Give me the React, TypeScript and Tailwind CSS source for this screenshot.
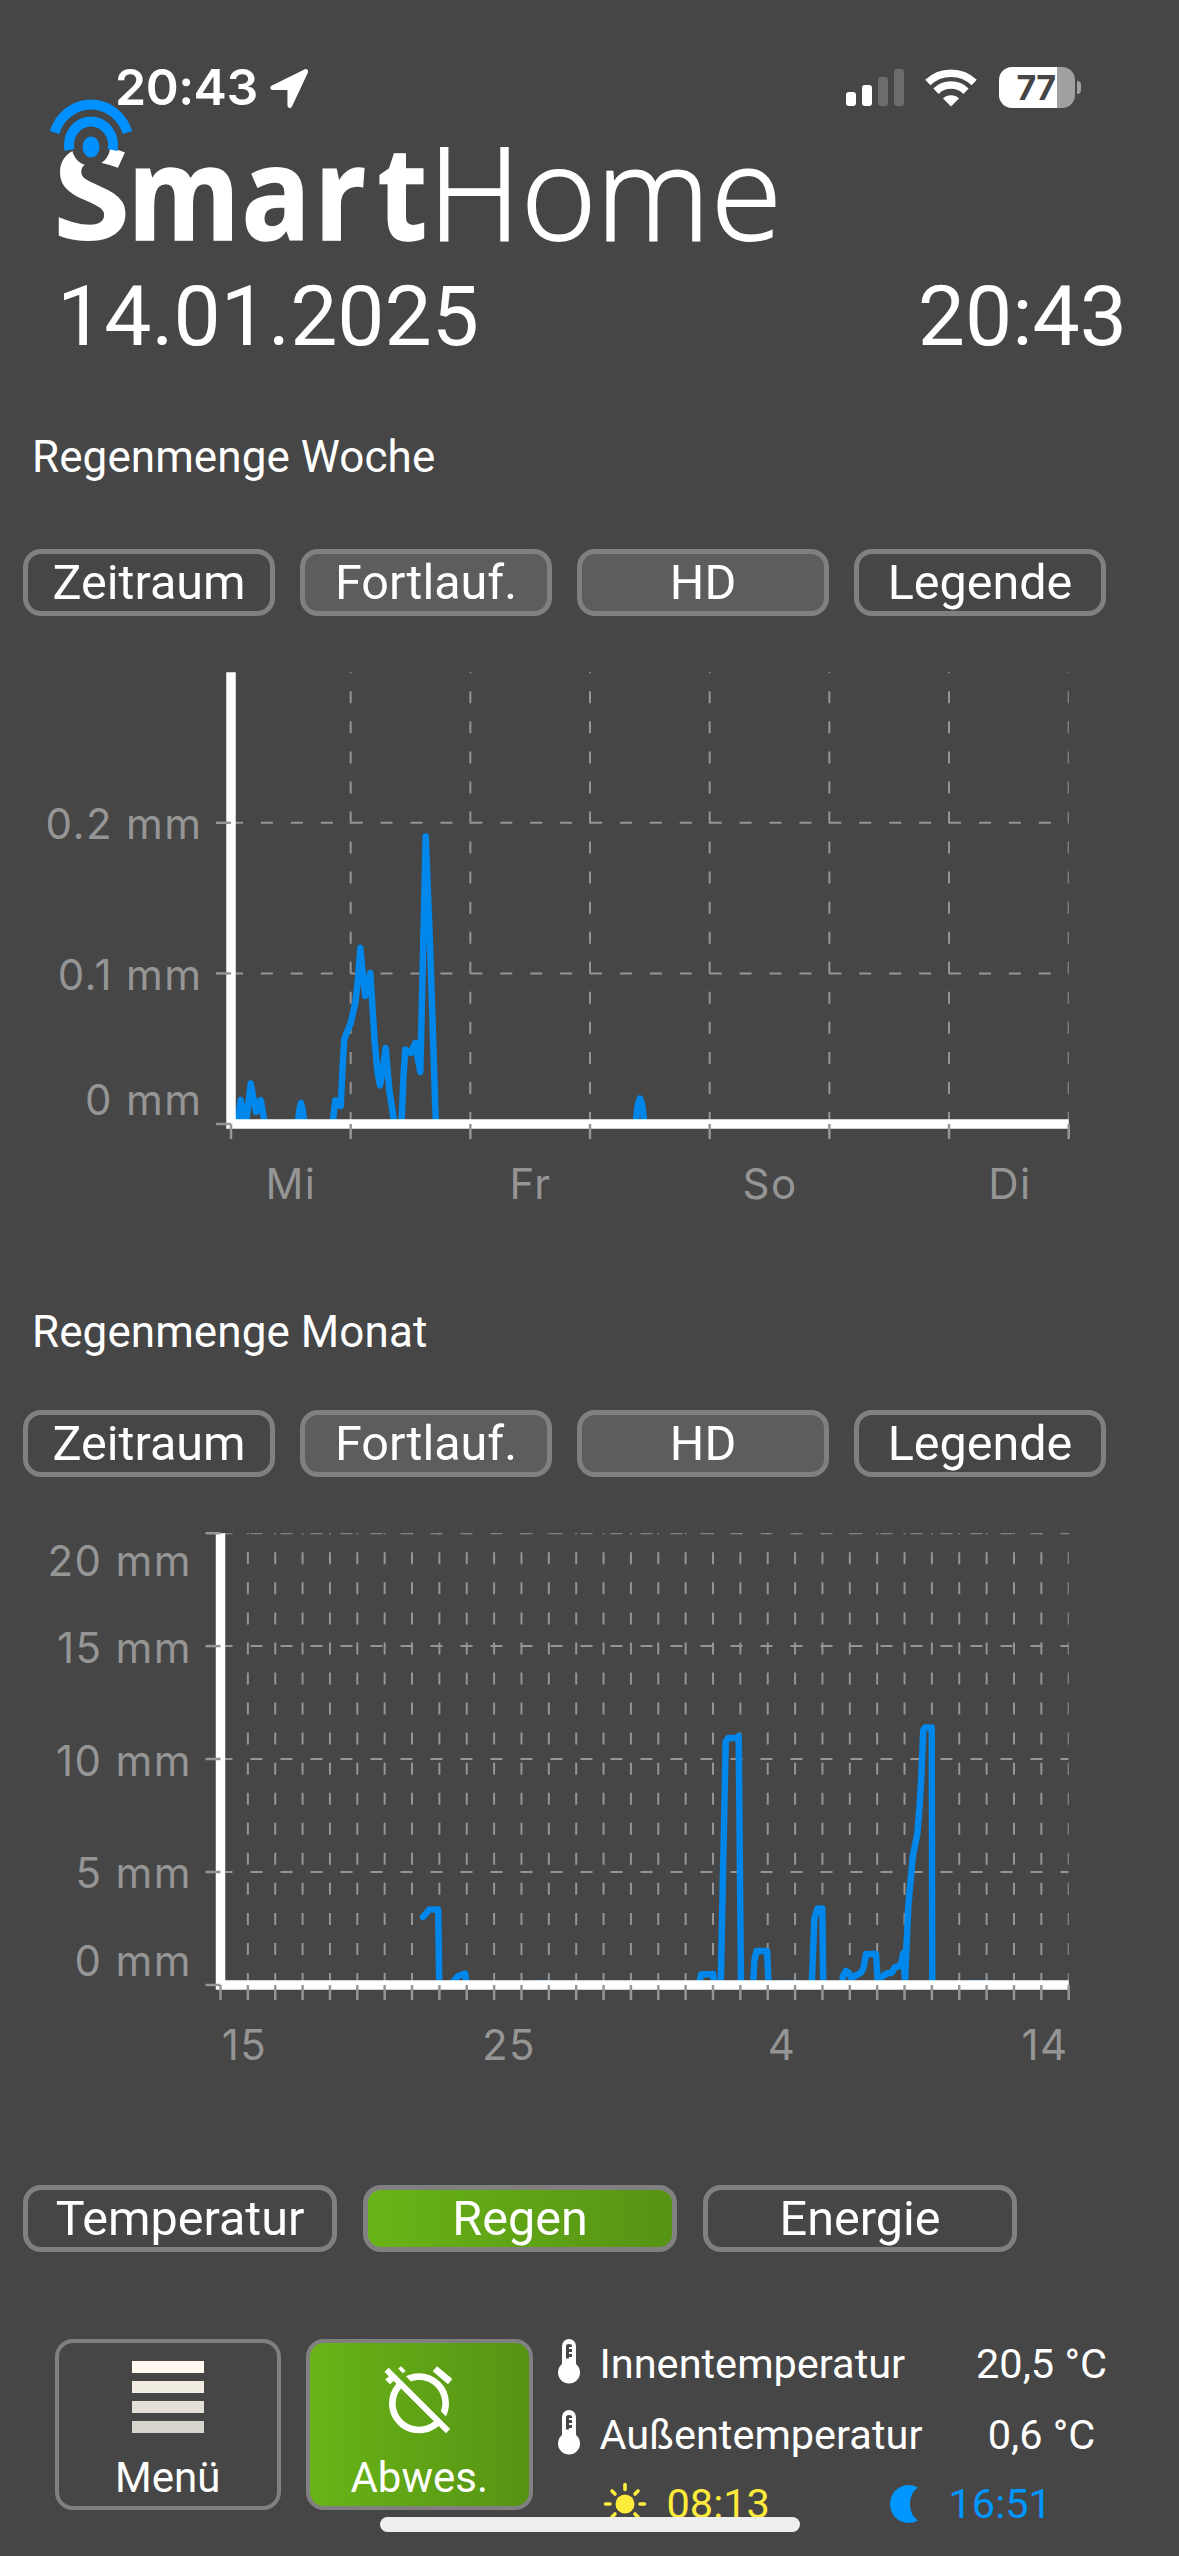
import React from "react";
import { MdAlarmOff } from "react-icons/md";

type Point = [number, number];

interface Tick {
  y: number;
  label: string;
  baseline: number;
}

interface XLabel {
  x: number;
  label: string;
}

interface ChartProps {
  left: number;
  labelEnd: number;
  columns: number;
  dash: string;
  yTicks: Tick[];
  xLabels: XLabel[];
  lines: Point[][];
}

// chart geometry, shared by both diagrams
const BASE = 474;
const TOP = 22.2;
const RIGHT = 1068.7;

const weekTicks: Tick[] = [
  { y: 172.8, label: "0.2 mm", baseline: 189 },
  { y: 323.4, label: "0.1 mm", baseline: 339.6 },
  { y: 474, label: "0 mm", baseline: 465 },
];

const weekLabels: XLabel[] = [
  { x: 291, label: "Mi" },
  { x: 530.5, label: "Fr" },
  { x: 770, label: "So" },
  { x: 1010, label: "Di" },
];

// [x, height above the axis]
const weekLines: Point[][] = [
  [[237, -4], [240.7, 24], [245.5, -4], [250.7, 40.5], [256, 12], [260.7, 24], [265.5, -4]],
  [[297, -4], [299.5, 15], [301, 21], [302.5, 15], [305, -4]],
  [
    [332, -4], [335.3, 23.5], [340.7, 18], [342.5, 55], [344.3, 85], [350.7, 101], [355.3, 121], [358, 145],
    [360.3, 176], [363, 148], [365.3, 128], [368, 142], [370.3, 151], [374.7, 82], [377.5, 52], [380, 38.5],
    [383, 56], [385.7, 76], [389.3, 34], [395, -4],
  ],
  [
    [401.3, -4], [403.5, 48], [405.3, 74.5], [410.7, 71], [415.3, 81], [418, 64], [420.3, 52], [425.7, 287.5],
    [430, 180], [436, -4],
  ],
  [[635, -4], [638, 20], [640, 25.5], [642, 20], [645, -4]],
];

const monthTicks: Tick[] = [
  { y: 22.2, label: "20 mm", baseline: 64.5 },
  { y: 135.1, label: "15 mm", baseline: 151.5 },
  { y: 248, label: "10 mm", baseline: 264.5 },
  { y: 361, label: "5 mm", baseline: 377.3 },
  { y: 474, label: "0 mm", baseline: 464.5 },
];

const monthLabels: XLabel[] = [
  { x: 244.5, label: "15" },
  { x: 509, label: "25" },
  { x: 782, label: "4" },
  { x: 1045, label: "14" },
];

const monthLines: Point[][] = [
  [[423, 68], [429.3, 75.5], [438.2, 75.5], [439.3, -2]],
  [[453, 3], [458, 9], [465, 11.5], [467, -2]],
  [[533.6, 1.5], [548, 1.5]],
  [[698.7, -2], [701, 10.5], [713, 11], [715, -2]],
  [[720.7, -2], [725.7, 243], [728, 247], [737, 247], [738.7, 249], [741, -2]],
  [[753, -2], [754.5, 25], [756.5, 34], [767, 34], [768.7, -2]],
  [[780, 1.5], [796, 1.5]],
  [[811.7, -2], [814.3, 66], [817.5, 76.5], [822.3, 76.5], [823.3, -2]],
  [
    [842, -2], [843, 9], [846, 14], [849, 12], [851, 7], [857, 10], [861, 12.5], [863.5, 17], [866, 31],
    [876, 31], [877.7, 4], [881.7, 8], [886.7, 11.5], [892, 12.5], [895, 18], [900.7, 19], [903.3, 32],
    [905, 4], [908.3, 79], [912.7, 128], [917.3, 151], [919.5, 178], [921.3, 208], [923.3, 255],
    [925, 257.5], [931.7, 257.5], [932.3, -2],
  ],
  [[970, 1.5], [988, 1.5]],
];

const filters = [
  { label: "Zeitraum", active: false },
  { label: "Fortlauf.", active: true },
  { label: "HD", active: true },
  { label: "Legende", active: false },
];

export default function App() {
  return (
    <div className="flex h-[2556px] w-[1179px] flex-col overflow-hidden bg-[#464646] font-['Roboto',sans-serif] text-white">
      <StatusBar />
      <Logo />

      <div className="mt-[19px] flex h-[84px] items-center justify-between pr-[52px] pl-[57px] text-[84px] leading-none">
        <span>14.01.2025</span>
        <span>20:43</span>
      </div>

      <h2 className="mt-[76px] pl-8 text-[44px] leading-none tracking-[0.08px]">Regenmenge Woche</h2>
      <FilterRow className="mt-[70px]" />
      <Chart
        left={231}
        labelEnd={202.5}
        columns={7}
        dash="12 17.92"
        yTicks={weekTicks}
        xLabels={weekLabels}
        lines={weekLines}
      />

      <h2 className="mt-[90px] pl-8 text-[44px] leading-none tracking-[0.08px]">Regenmenge Monat</h2>
      <FilterRow className="mt-14" />
      <Chart
        left={220.5}
        labelEnd={192}
        columns={31}
        dash="12 18"
        yTicks={monthTicks}
        xLabels={monthLabels}
        lines={monthLines}
      />

      <div className="mt-[104px] flex gap-[26px] pl-[23px] text-[48.5px] leading-none">
        <Tab label="Temperatur" />
        <Tab label="Regen" active />
        <Tab label="Energie" />
      </div>

      <Footer />
    </div>
  );
}

function StatusBar() {
  return (
    <div className="flex h-[110px] shrink-0 items-start pl-[115px]">
      <span className="mt-[62px] w-[146px] font-['Inter',sans-serif] text-[50px] leading-[50px] font-semibold tracking-[-0.5px]">
        20:43
      </span>
      <svg className="mt-[68px] ml-2 h-[41px] w-[40px]" viewBox="0 0 40 41">
        <path
          d="M36 2.5 3.5 18.5Q1.5 19.8 3.5 20.8H18.5Q19.7 21 19.7 22.2V37.5Q20.5 40 22 37.8L37.7 4.2Q38.2 1.6 36 2.5Z"
          fill="white"
          stroke="white"
          strokeWidth="2.5"
          strokeLinejoin="round"
        />
      </svg>

      <div className="mt-[69px] ml-[537px] flex h-[37px] items-end gap-1.5">
        <div className="h-3.5 w-2.5 rounded-[3px] bg-white" />
        <div className="h-[21px] w-2.5 rounded-[3px] bg-white" />
        <div className="h-[29px] w-2.5 rounded-[3px] bg-[#6c6c6c]" />
        <div className="h-[37px] w-2.5 rounded-[3px] bg-[#6c6c6c]" />
      </div>
      <svg className="mt-[68px] ml-[20px] h-[39px] w-[54px]" viewBox="0 0 54 39">
        <path d="M3.8 14.5a33.5 33.5 0 0 1 46.4 0" fill="none" stroke="white" strokeWidth="7.5" />
        <path d="M12 23.2a21.5 21.5 0 0 1 30 0" fill="none" stroke="white" strokeWidth="7.5" />
        <path d="M27 38.5l-8-8a11.5 11.5 0 0 1 16 0z" fill="white" />
      </svg>
      <div className="mt-[67px] ml-[21px] flex h-[41px] w-[76px] items-center justify-center rounded-[13px] bg-[linear-gradient(to_right,#fff_58px,#a0a0a0_58px)] pr-[2px] font-['Inter',sans-serif] text-[34px] leading-none font-bold tracking-[-0.5px] text-[#464646]">
        77
      </div>
      <div className="mt-[81px] ml-0.5 h-[13px] w-1 rounded-r-full bg-[#a0a0a0]" />
    </div>
  );
}

function Logo() {
  return (
    <svg
      className="-mt-3.5 h-40 w-[800px] shrink-0 overflow-visible"
      viewBox="0 0 800 160"
      fontFamily="'Open Sans', sans-serif"
    >
      <g fontSize="130" fontWeight="700" fill="white">
        <text x="47.5" y="144" transform="scale(1.1 1)">
          S
        </text>
        <text x="145 274.5 357 429" y="144" transform="scale(0.88 1)" stroke="white" strokeWidth="1.5">
          mart
        </text>
      </g>
      <text x="428 521 596 711" y="144" fontSize="129" fontWeight="300" fill="white" stroke="white" strokeWidth="1.8">
        Home
      </text>
      {/* gap between the letter and the signal waves */}
      <circle cx="91" cy="51" r="19" fill="#464646" />
      <ellipse cx="91" cy="51" rx="8.5" ry="10.5" fill="#0090ff" />
      <path d="M69.5 54a22 23.5 0 1 1 43 0" fill="none" stroke="#0090ff" strokeWidth="10" />
      <path d="M54.5 36.5a38.5 41 0 0 1 73 0" fill="none" stroke="#0090ff" strokeWidth="10" />
    </svg>
  );
}

function FilterRow({ className }: { className: string }) {
  return (
    <div className={`${className} flex gap-[25px] pl-[23px] text-[48.5px] leading-none`}>
      {filters.map((f) => (
        <button
          key={f.label}
          className={`flex h-[67px] w-[252px] items-center justify-center rounded-[18px] border-5 border-[#808080] pt-0.5 ${
            f.active ? "bg-[#5d5d5d]" : ""
          }`}
        >
          {f.label}
        </button>
      ))}
    </div>
  );
}

function Tab({ label, active }: { label: string; active?: boolean }) {
  return (
    <button
      className={`flex h-[67px] w-[314px] items-center justify-center rounded-[18px] border-5 border-[#808080] pt-0.5 ${
        active ? "bg-linear-to-r from-[#69b418] to-[#569314]" : ""
      }`}
    >
      {label}
    </button>
  );
}

function Chart({ left, labelEnd, columns, dash, yTicks, xLabels, lines }: ChartProps) {
  const step = (RIGHT - left) / columns;
  const xs = Array.from({ length: columns + 1 }, (_, i) => left + i * step);
  const clipId = `plot-${columns}`;

  return (
    <svg className="mt-[34px] h-[570px] w-[1179px] shrink-0" viewBox="0 0 1179 570">
      <clipPath id={clipId}>
        <rect x={left} y={TOP} width={RIGHT - left} height={BASE - TOP} />
      </clipPath>

      <g clipPath={`url(#${clipId})`} fill="none">
        <g stroke="#959595" strokeWidth="2">
          {xs.slice(1).map((x) => (
            <path key={x} d={`M${x} ${BASE}V${TOP - 2}`} strokeDasharray="12 18.05" />
          ))}
          {yTicks.map((t) => (
            <path key={t.y} d={`M${left} ${t.y}H${RIGHT}`} strokeDasharray={dash} />
          ))}
        </g>
        <g stroke="#0087eb" strokeWidth="6.5" strokeLinejoin="round" strokeLinecap="round">
          {lines.map((line, i) => (
            <polyline key={i} points={line.map(([x, h]) => `${x},${BASE - h}`).join(" ")} />
          ))}
        </g>
      </g>

      <path d={`M${left} ${TOP}V${BASE}H${RIGHT}`} fill="none" stroke="white" strokeWidth="9.5" />

      <g stroke="#959595" strokeWidth="2.5">
        {yTicks.map((t) => (
          <path key={t.y} d={`M${left - 15} ${t.y}H${left}`} />
        ))}
        {xs.map((x) => (
          <path key={x} d={`M${x} ${BASE}V${BASE + 15}`} />
        ))}
      </g>

      <g fill="#959595" fontFamily="Inter, sans-serif" fontSize="42" letterSpacing="1.4">
        {yTicks.map((t) => (
          <text key={t.label} x={labelEnd} y={t.baseline} textAnchor="end">
            {t.label}
          </text>
        ))}
        {xLabels.map((l) => (
          <text key={l.label} x={l.x} y="549" textAnchor="middle">
            {l.label}
          </text>
        ))}
      </g>
    </svg>
  );
}

function Footer() {
  return (
    <div className="relative mt-[87px] flex h-[217px] shrink-0 items-start pl-[54.5px] text-[42px] leading-none">
      <button className="flex h-[171px] w-[226.5px] flex-col items-center rounded-[18px] border-4 border-[#808080] pt-[18px]">
        <div className="flex flex-col gap-2">
          <div className="h-3 w-[72px] bg-[#fff9ef]" />
          <div className="h-3 w-[72px] bg-[#f1ede3]" />
          <div className="h-3 w-[72px] bg-[#e5e0d7]" />
          <div className="h-3 w-[72px] bg-[#d7d4cc]" />
        </div>
        <span className="mt-[24px]">Menü</span>
      </button>
      <button className="ml-[25px] flex h-[171px] w-[226.5px] flex-col items-center rounded-[18px] border-4 border-[#808080] bg-linear-to-r from-[#69b418] to-[#569314] pt-[17px]">
        <MdAlarmOff className="h-20 w-20" />
        <span className="mt-[17px]">Abwes.</span>
      </button>

      <div className="ml-6 flex w-[600px] flex-col text-[41.5px]">
        <TempRow label="Innentemperatur" value="20,5 °C" />
        <TempRow label="Außentemperatur" value="0,6 °C" />
        <div className="flex h-[46px] items-center">
          <svg className="ml-[46px] h-[44px] w-[44px]" viewBox="0 0 44 44">
            <circle cx="22" cy="22" r="9.5" fill="#ffeb3b" />
            <path
              d="M22 2.5v5M22 36.5v5M2.5 22h4.5M37 22h4.5M9 9l3 3M32 32l3 3M9 35l3-3M32 12l3-3"
              stroke="#ffeb3b"
              strokeWidth="3.6"
              strokeLinecap="round"
            />
          </svg>
          <span className="ml-5 w-[222px] text-[#ffeb3b]">08:13</span>
          <svg className="h-[40px] w-[30px]" viewBox="0 0 30 40">
            <path d="M19.5 1Q25 1 29 3.5Q21 9 21 20T29 36.5Q25 39 19.5 39A18.5 19 0 0 1 19.5 1Z" fill="#0096ff" />
          </svg>
          <span className="ml-[30px] text-[#0096ff]">16:51</span>
        </div>
      </div>

      {/* home indicator */}
      <div className="absolute top-[178px] left-[380px] h-[15px] w-[420px] rounded-full bg-[#eeeeee]" />
    </div>
  );
}

function TempRow({ label, value }: { label: string; value: string }) {
  return (
    <div className="flex h-[71px] items-start">
      <svg className="h-[46px] w-[24px]" viewBox="0 0 24 46">
        <circle cx="12" cy="33.5" r="11" fill="white" />
        <rect x="5" y="0" width="14" height="34" rx="7" fill="white" />
        <path d="M9 7q0-2 3-2t3 1.500v1.500h-3v2h3v3h-3v2h3v3h-3v1.500h-3z" fill="#464646" />
      </svg>
      <span className="mt-[4px] ml-[19px] w-[330px]">{label}</span>
      <span className="mt-[4px] ml-[12px] w-[200px] text-center">{value}</span>
    </div>
  );
}
